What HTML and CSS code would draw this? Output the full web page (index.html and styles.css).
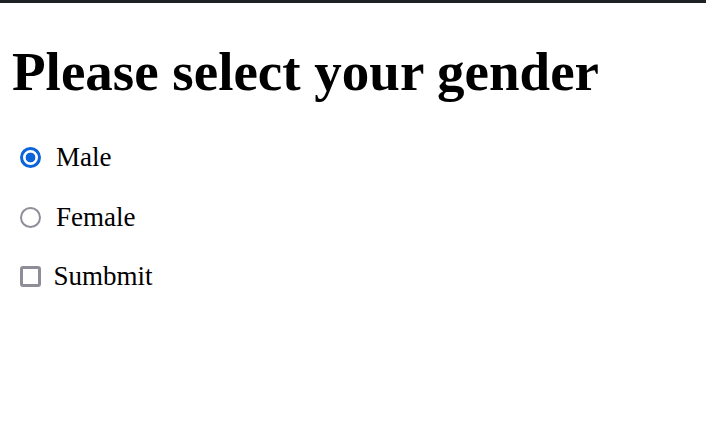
FILE: index.html
```html
<!DOCTYPE html>
<html lang="en">
<head>
<meta charset="utf-8">
<title>Gender</title>
<link rel="stylesheet" href="styles.css">
</head>
<body>
<div class="topbar"></div>
<main class="page">
  <h1 class="title">Please select your gender</h1>
  <form class="options">
    <label class="option"><input class="radio" type="radio" name="gender" checked><span>Male</span></label>
    <label class="option"><input class="radio" type="radio" name="gender"><span>Female</span></label>
    <label class="option"><input class="check" type="checkbox"><span>Sumbmit</span></label>
  </form>
</main>
</body>
</html>
```
FILE: styles.css
```css
html, body {
  margin: 0;
  padding: 0;
  background: #ffffff;
}
body {
  font-family: "Liberation Serif", "Times New Roman", serif;
  color: #000;
}
.topbar {
  height: 3px;
  background: #202124;
}
.page {
  padding: 0 12px;
}
.title {
  font-size: 55px;
  font-weight: bold;
  margin: 38px 0 0;
  line-height: 61px;
}
.options {
  display: flex;
  flex-direction: column;
  gap: 28.5px;
  margin-top: 40px;
}
.option {
  display: flex;
  align-items: center;
  font-size: 27px;
  line-height: 31px;
}
.radio, .check {
  appearance: none;
  -webkit-appearance: none;
  margin: 0 15px 0 8px;
  box-sizing: border-box;
  width: 21px;
  height: 21px;
  flex: none;
}
.radio {
  border: 2.5px solid #8e8e98;
  border-radius: 50%;
}
.radio:checked {
  border: 3px solid #0b64d9;
  background: radial-gradient(circle, #0b64d9 0 4.6px, #ffffff 5.2px);
}
.check {
  border: 3px solid #8e8e98;
  border-radius: 3px;
  margin: 0 13px 0 7.5px;
}
```
